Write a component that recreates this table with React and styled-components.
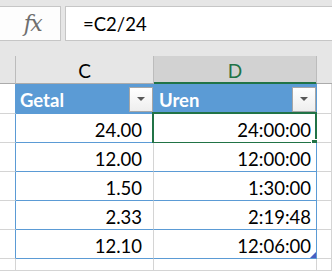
import { Fragment } from "react";
import styled, { createGlobalStyle } from "styled-components";

const GlobalStyle = createGlobalStyle`
  body {
    margin: 0;
    background: #ffffff;
    font-family: Lato, "Open Sans", sans-serif;
  }
`;

const Window = styled.div`
  width: 332px;
  height: 271px;
  overflow: hidden;
  background: #e6e6e6;
`;

const FormulaBar = styled.div`
  height: 56px;
  box-sizing: border-box;
  padding-top: 6px;
  display: flex;
  align-items: flex-start;
  gap: 4px;
`;

const FxBox = styled.div`
  width: 62px;
  height: 35px;
  margin-left: -1px;
  box-sizing: border-box;
  border: 1px solid #c6c6c6;
  background: #fdfdfd;
  display: flex;
  align-items: center;
  justify-content: center;
  font-family: "DejaVu Serif", "Liberation Serif", serif;
  font-style: italic;
  font-size: 22px;
  color: #6e6e6e;
  padding-left: 5px;
  padding-bottom: 1px;
  letter-spacing: -1.5px;
`;

const FormulaInput = styled.div`
  flex: 1;
  height: 35px;
  box-sizing: border-box;
  border: 1px solid #c6c6c6;
  border-right: none;
  background: #ffffff;
  display: flex;
  align-items: center;
  padding-left: 17px;
  font-size: 18.5px;
  color: #000000;
`;

const Sheet = styled.div`
  display: grid;
  grid-template-columns: 16px 138px 163px 1fr;
  grid-template-rows: 28px 30px repeat(5, 29px) 1fr;
  height: 215px;
`;

const ColHeader = styled.div`
  box-sizing: border-box;
  border-bottom: 1px solid ${(p) => (p.$active ? "#217346" : "#ababab")};
  border-right: 1px solid #bcbcbc;
  background: ${(p) => (p.$active ? "#d2d2d2" : "#e6e6e6")};
  color: ${(p) => (p.$active ? "#217346" : "#000000")};
  display: flex;
  align-items: center;
  justify-content: center;
  font-size: 19px;
  padding-top: 2px;
  ${(p) => p.$active && "box-shadow: inset 0 -1px 0 #217346;"}
  ${(p) => p.$edge && "border-right: none;"}
`;

const Cell = styled.div`
  position: relative;
  box-sizing: border-box;
  background: #ffffff;
  border-right: 1px solid ${(p) => (p.$blueRight ? "#5b9bd5" : "#d4d4d4")};
  border-bottom: 1px solid ${(p) => (p.$blueBottom ? "#5b9bd5" : "#d4d4d4")};
  display: flex;
  align-items: flex-end;
  justify-content: flex-end;
  padding: 0 ${(p) => p.$padRight || 5}px 3px 4px;
  font-size: 18.5px;
  color: #000000;
  line-height: 1;
`;

const HeadCell = styled.div`
  box-sizing: border-box;
  background: #5b9bd5;
  border-bottom: 1px solid #5b9bd5;
  border-right: 1px solid #5b9bd5;
  display: flex;
  align-items: center;
  justify-content: space-between;
  padding-left: ${(p) => p.$padLeft}px;
  color: #ffffff;
  font-weight: 700;
  font-size: 18.5px;
`;

const HeadLabel = styled.span`
  padding-top: 2px;
`;

const FilterButton = styled.div`
  width: 24px;
  height: 25px;
  box-sizing: border-box;
  border: 1px solid #a6a6a6;
  background: linear-gradient(#ffffff, #eeeeee);
  display: flex;
  align-items: center;
  justify-content: center;
  margin-top: 1px;
`;

const Triangle = styled.div`
  width: 0;
  height: 0;
  border-left: 4.5px solid transparent;
  border-right: 4.5px solid transparent;
  border-top: 4.5px solid #595959;
`;

const Selection = styled.div`
  position: absolute;
  left: -2px;
  top: -2px;
  right: -1px;
  bottom: -2px;
  border: 2px solid #217346;
  pointer-events: none;
`;

const FillHandle = styled.div`
  position: absolute;
  right: -4px;
  bottom: -5px;
  width: 6px;
  height: 6px;
  background: #217346;
  border: 1px solid #ffffff;
`;

const ResizeHandle = styled.div`
  position: absolute;
  right: 0;
  bottom: 0;
  width: 0;
  height: 0;
  border-left: 6px solid transparent;
  border-bottom: 6px solid #4a5fc1;
`;

const rows = [
  ["24.00", "24:00:00"],
  ["12.00", "12:00:00"],
  ["1.50", "1:30:00"],
  ["2.33", "2:19:48"],
  ["12.10", "12:06:00"],
];

function Filter() {
  return (
    <FilterButton>
      <Triangle />
    </FilterButton>
  );
}

export default function App() {
  return (
    <Window>
      <GlobalStyle />
      <FormulaBar>
        <FxBox>fx</FxBox>
        <FormulaInput>=C2/24</FormulaInput>
      </FormulaBar>
      <Sheet>
        <ColHeader />
        <ColHeader>C</ColHeader>
        <ColHeader $active>D</ColHeader>
        <ColHeader $edge />

        <Cell $blueRight />
        <HeadCell $padLeft={4}>
          <HeadLabel>Getal</HeadLabel>
          <Filter />
        </HeadCell>
        <HeadCell $padLeft={5}>
          <HeadLabel>Uren</HeadLabel>
          <Filter />
        </HeadCell>
        <Cell />

        {rows.map(([getal, uren], i) => (
          <Fragment key={i}>
            <Cell $blueRight />
            <Cell $blueBottom $padRight={11}>
              {getal}
            </Cell>
            <Cell $blueBottom $blueRight>
              {uren}
              {i === 0 && (
                <Selection>
                  <FillHandle />
                </Selection>
              )}
              {i === rows.length - 1 && <ResizeHandle />}
            </Cell>
            <Cell />
          </Fragment>
        ))}

        <Cell />
        <Cell />
        <Cell />
        <Cell />
      </Sheet>
    </Window>
  );
}
